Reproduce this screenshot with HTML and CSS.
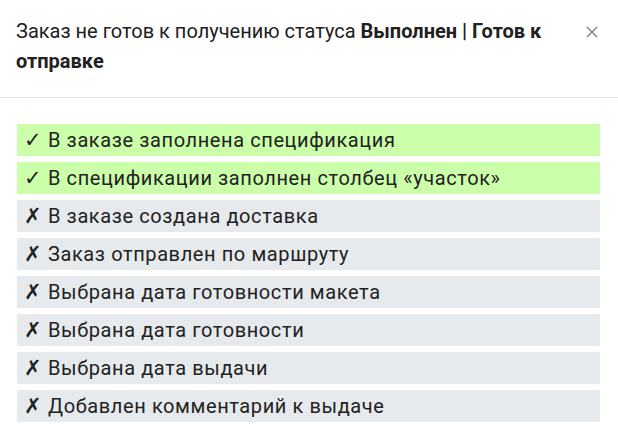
FILE: index.html
```html
<!DOCTYPE html>
<html lang="ru">
<head>
<meta charset="utf-8">
<link rel="stylesheet" href="styles.css">
</head>
<body>
<div class="dialog">
  <div class="header">
    <div class="title">Заказ не готов к получению статуса <b>Выполнен | Готов к отправке</b></div>
    <button class="close" aria-label="Закрыть">
      <svg width="12" height="12" viewBox="0 0 12 12"><path d="M1 1L11 11M11 1L1 11" stroke="#8a8a8a" stroke-width="1.6"/></svg>
    </button>
  </div>
  <ul class="list">
    <li class="item ok"><span class="mark">✓</span>В заказе заполнена спецификация</li>
    <li class="item ok"><span class="mark">✓</span>В спецификации заполнен столбец «участок»</li>
    <li class="item no"><span class="mark">✗</span>В заказе создана доставка</li>
    <li class="item no"><span class="mark">✗</span>Заказ отправлен по маршруту</li>
    <li class="item no"><span class="mark">✗</span>Выбрана дата готовности макета</li>
    <li class="item no"><span class="mark">✗</span>Выбрана дата готовности</li>
    <li class="item no"><span class="mark">✗</span>Выбрана дата выдачи</li>
    <li class="item no"><span class="mark">✗</span>Добавлен комментарий к выдаче</li>
  </ul>
</div>
</body>
</html>
```
FILE: styles.css
```css
html, body { margin: 0; padding: 0; background: #fff; }
.dialog { width: 618px; font-family: Roboto, "Noto Sans", sans-serif; color: #212121; }
.header {
  display: flex;
  align-items: flex-start;
  justify-content: space-between;
  padding: 16px 16px 0 16px;
  height: 81px;
  border-bottom: 1px solid #e6e6e6;
}
.title { font-size: 20px; line-height: 30px; width: 540px; }
.title b { font-weight: 700; }
.close {
  border: 0; background: none; padding: 0; margin: 9px 3px 0 0;
  width: 14px; height: 14px; display: flex; align-items: center; justify-content: center;
}
.list {
  list-style: none; margin: 0; padding: 26px 18px 0 17px;
  display: flex; flex-direction: column; gap: 6px;
}
.item {
  display: flex; align-items: center;
  height: 32px; padding-left: 7px;
  font-family: Roboto, sans-serif; font-size: 20px; letter-spacing: 0.6px; color: #222;
}
.mark {
  font-family: "DejaVu Sans", sans-serif; font-weight: bold; font-size: 21px;
  width: 24px; letter-spacing: 0; line-height: 1;
}
.ok { background: #ccffaa; }
.no { background: #e7eaed; }
```
